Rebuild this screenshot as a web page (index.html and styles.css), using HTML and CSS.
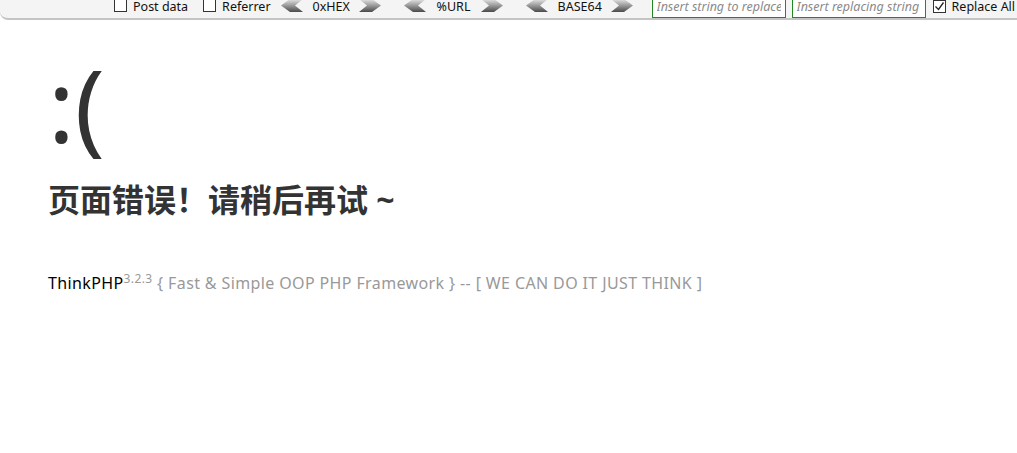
FILE: index.html
```html
<!DOCTYPE html>
<html lang="zh-CN">
<head>
<meta charset="utf-8">
<title>系统发生错误</title>
<link rel="stylesheet" href="styles.css">
</head>
<body>
<div class="hackbar">
  <label class="hb-check"><span class="box"></span>Post data</label>
  <label class="hb-check"><span class="box"></span>Referrer</label>
  <div class="hb-enc">
    <svg class="arr" width="22" height="13" viewBox="0 0 22 13"><defs><linearGradient id="g1" x1="0" y1="0" x2="0" y2="1"><stop offset="0" stop-color="#e6e6e6"/><stop offset="0.5" stop-color="#9a9a9a"/><stop offset="1" stop-color="#4a4a4a"/></linearGradient></defs><polygon points="0,6.5 9,0 22,0 14,6.5 22,13 9,13" fill="url(#g1)"/></svg>
    <span class="lbl hex">0xHEX</span>
    <svg class="arr" width="22" height="13" viewBox="0 0 22 13"><polygon points="22,6.5 13,0 0,0 8,6.5 0,13 13,13" fill="url(#g1)"/></svg>
  </div>
  <div class="hb-enc">
    <svg class="arr" width="22" height="13" viewBox="0 0 22 13"><polygon points="0,6.5 9,0 22,0 14,6.5 22,13 9,13" fill="url(#g1)"/></svg>
    <span class="lbl url">%URL</span>
    <svg class="arr" width="22" height="13" viewBox="0 0 22 13"><polygon points="22,6.5 13,0 0,0 8,6.5 0,13 13,13" fill="url(#g1)"/></svg>
  </div>
  <div class="hb-enc last">
    <svg class="arr" width="22" height="13" viewBox="0 0 22 13"><polygon points="0,6.5 9,0 22,0 14,6.5 22,13 9,13" fill="url(#g1)"/></svg>
    <span class="lbl b64">BASE64</span>
    <svg class="arr" width="22" height="13" viewBox="0 0 22 13"><polygon points="22,6.5 13,0 0,0 8,6.5 0,13 13,13" fill="url(#g1)"/></svg>
  </div>
  <input class="hb-input first" type="text" placeholder="Insert string to replace">
  <input class="hb-input" type="text" placeholder="Insert replacing string">
  <label class="hb-check last"><span class="box checked"><svg width="11" height="11" viewBox="0 0 11 11"><polyline points="1.5,5.5 4.5,8.5 9.5,1.5" fill="none" stroke="#222" stroke-width="1.3"/></svg></span>Replace All</label>
</div>

<div class="error">
  <p class="face">:(</p>
  <h1>页面错误！请稍后再试 ~</h1>
  <div class="content"></div>
</div>
<div class="copyright">
  <p><a class="brand" href="#">ThinkPHP</a><sup>3.2.3</sup> { Fast &amp; Simple OOP PHP Framework } -- [ WE CAN DO IT JUST THINK ]</p>
</div>
</body>
</html>
```
FILE: styles.css
```css
* { padding: 0; margin: 0; box-sizing: border-box; }
html { background: #fff; }
body {
  background: #fff;
  font-family: "Noto Sans", "Noto Sans CJK SC", sans-serif;
  color: #333;
  font-size: 16px;
}

.hackbar {
  height: 20px;
  background: #f4f4f4;
  border-bottom: 2px solid #c4c4c4;
  border-bottom-left-radius: 8px;
  display: flex;
  align-items: flex-start;
  padding-left: 114px;
  overflow: hidden;
  font-family: "Noto Sans", "Liberation Sans", sans-serif;
  font-size: 12.5px;
  color: #111;
  line-height: 12px;
  white-space: nowrap;
}
.hb-check {
  display: flex;
  align-items: flex-start;
  margin-right: 15px;
  flex: none;
  padding-top: 1px;
}
.hb-check .box {
  width: 13px;
  height: 13px;
  margin-top: -2px;
  border: 1px solid #333;
  background: #fff;
  margin-right: 6px;
  display: flex;
  align-items: center;
  justify-content: center;
  flex: none;
}
.hb-check.last { margin-left: 1px; margin-right: 0; }
.hb-check.last .box { margin-top: -1px; }
.hb-enc {
  display: flex;
  align-items: flex-start;
  margin-left: -5px;
  margin-right: 28px;
  flex: none;
}
.hb-enc.last { margin-right: 25px; }
.hb-enc .arr { margin-top: -1px; display: block; flex: none; }
.hb-enc .lbl { padding: 1px 0 0 10px; }
.hb-enc .lbl.hex { width: 56px; }
.hb-enc .lbl.url { width: 55px; padding-left: 11px; }
.hb-enc .lbl.b64 { width: 63px; }
.hb-input {
  width: 134px;
  height: 20px;
  margin-top: -2px;
  border: 1px solid #1f8a1f;
  background: #fff;
  font-family: "Noto Sans", sans-serif;
  font-style: italic;
  font-size: 12.5px;
  padding: 0 4px 4px;
  margin-right: 6px;
  flex: none;
}
.hb-input.first { margin-left: -6px; }
.hb-input::placeholder { color: #8a8a8a; }

.error { padding: 24px 48px; }
.face {
  font-size: 100px;
  font-weight: normal;
  line-height: 120px;
  margin-bottom: 12px;
}
h1 { font-size: 32px; line-height: 48px; }
.error .content { padding-top: 10px; }
.copyright { padding: 12px 48px; color: #999; letter-spacing: 0.38px; }
.copyright a.brand { color: #000; text-decoration: none; }
sup { font-size: 12px; }
```
